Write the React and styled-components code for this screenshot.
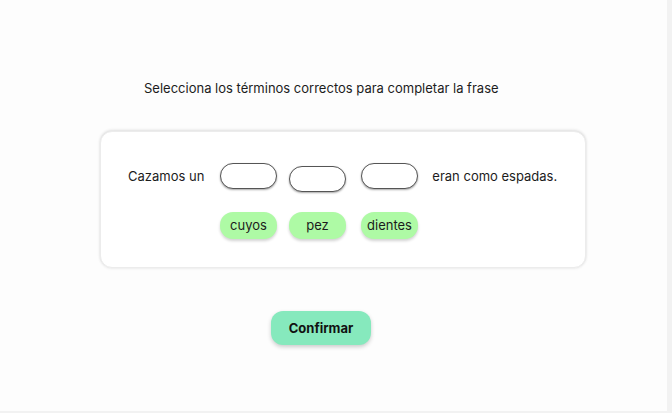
import React from "react";
import styled, { createGlobalStyle } from "styled-components";

const GlobalStyle = createGlobalStyle`
  body {
    margin: 0;
    background: #f2f2f2;
    font-family: Inter, "Noto Sans", sans-serif;
  }
`;

const Page = styled.main`
  width: 667px;
  height: 411px;
  background: #fdfdfd;
  box-sizing: border-box;
  padding-top: 80px;
`;

const Title = styled.p`
  margin: 0 0 0 144px;
  font-size: 13px;
  line-height: 17px;
  color: #1c1c1c;
`;

const Card = styled.section`
  margin: 34px 0 0 100px;
  width: 486px;
  height: 137px;
  box-sizing: border-box;
  border-radius: 12px;
  background: #ffffff;
  border: 1px solid #ececec;
  box-shadow: 0 -1px 3px rgba(0, 0, 0, 0.12), 0 1px 3px rgba(0, 0, 0, 0.05);
  padding: 30px 0 0 27px;
`;

const Row = styled.div`
  display: flex;
  align-items: center;
  height: 28px;
  margin-left: ${(p) => p.$indent || 0}px;
`;

const Words = styled.span`
  font-size: 13px;
  color: #1c1c1c;
  margin-right: ${(p) => p.$after || 0}px;
  margin-left: ${(p) => p.$before || 0}px;
  white-space: nowrap;
`;

const Blank = styled.div`
  width: 57px;
  height: 26px;
  box-sizing: border-box;
  border: 1px solid #555;
  border-radius: 13px;
  background: #fff;
  box-shadow: 0 1px 2px rgba(0, 0, 0, 0.35);
  margin-right: ${(p) => p.$gap || 0}px;
  margin-top: ${(p) => (p.$drop ? 5 : 0)}px;
`;

const Chips = styled(Row)`
  margin-top: 21px;
`;

const Chip = styled.button`
  width: 57px;
  height: 27px;
  border: none;
  border-radius: 13px;
  background: #aefaa5;
  box-shadow: 0 2px 3px rgba(0, 0, 0, 0.18);
  font-family: inherit;
  font-size: 13px;
  color: #1c1c1c;
  padding: 0;
  margin-right: ${(p) => p.$gap || 0}px;
`;

const Confirm = styled.button`
  display: block;
  margin: 43px 0 0 271px;
  width: 100px;
  height: 34px;
  border: none;
  border-radius: 12px;
  background: #86e9bd;
  box-shadow: 0 2px 4px rgba(0, 0, 0, 0.2);
  font-family: inherit;
  font-weight: 700;
  font-size: 13px;
  color: #111;
`;

export default function App() {
  return (
    <>
      <GlobalStyle />
      <Page>
        <Title>Selecciona los términos correctos para completar la frase</Title>
        <Card>
          <Row>
            <Words $after={16}>Cazamos un</Words>
            <Blank $gap={12} />
            <Blank $gap={15} $drop />
            <Blank $gap={14} />
            <Words>eran como espadas.</Words>
          </Row>
          <Chips $indent={92}>
            <Chip $gap={12}>cuyos</Chip>
            <Chip $gap={15}>pez</Chip>
            <Chip>dientes</Chip>
          </Chips>
        </Card>
        <Confirm>Confirmar</Confirm>
      </Page>
    </>
  );
}
